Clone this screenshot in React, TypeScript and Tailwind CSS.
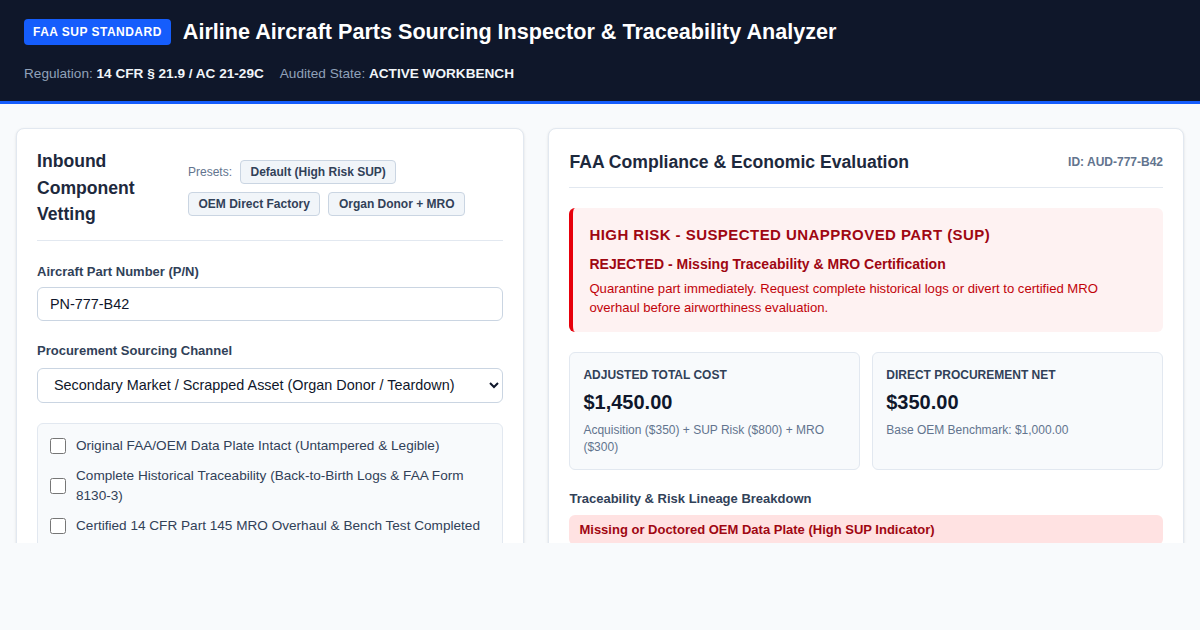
import { useState } from 'react';

const presets = ['OEM Direct Factory', 'Organ Donor + MRO'];

const checks = [
  'Original FAA/OEM Data Plate Intact (Untampered & Legible)',
  'Complete Historical Traceability (Back-to-Birth Logs & FAA Form 8130-3)',
  'Certified 14 CFR Part 145 MRO Overhaul & Bench Test Completed',
];

export default function App() {
  const [pn, setPn] = useState('PN-777-B42');

  return (
    <div className="min-h-[630px] bg-slate-50 font-['Liberation_Sans',Arial,sans-serif] text-slate-800">
      {/* Header */}
      <header className="h-[104px] bg-[#0f172a] border-b-[3px] border-blue-600 px-6 pt-[19px]">
        <div className="flex items-center gap-3">
          <span className="bg-blue-600 text-white text-[12px] font-bold tracking-[0.04em] px-[9px] h-[26px] flex items-center rounded">
            FAA SUP STANDARD
          </span>
          <h1 className="text-[21.6px] font-bold text-white leading-none">
            Airline Aircraft Parts Sourcing Inspector &amp; Traceability Analyzer
          </h1>
        </div>
        <div className="mt-[19px] text-[13.6px] leading-[20px] text-slate-400 flex gap-4">
          <span>Regulation: <b className="text-slate-100">14 CFR § 21.9 / AC 21-29C</b></span>
          <span>Audited State: <b className="text-slate-100">ACTIVE WORKBENCH</b></span>
        </div>
      </header>

      {/* Workspace */}
      <main className="h-[439px] overflow-hidden px-4 pt-6">
        <div className="grid grid-cols-[4fr_5fr] gap-6 items-start">
          {/* Left card */}
          <section className="bg-white border border-slate-200 rounded-lg px-5 pt-5 pb-6 shadow-sm">
            <div className="flex items-center gap-4 border-b border-slate-200 pb-3">
              <h2 className="w-[135px] shrink-0 text-[17.6px] font-semibold leading-[26.5px] text-slate-800 -mt-[1px]">
                Inbound Component Vetting
              </h2>
              <div className="flex flex-wrap items-center gap-2">
                <span className="text-[12px] text-slate-500">Presets:</span>
                <button className="text-[12px] font-semibold text-slate-700 bg-slate-100 border border-slate-300 rounded px-[9.5px] h-6">
                  Default (High Risk SUP)
                </button>
                {presets.map((p) => (
                  <button key={p} className="text-[12px] font-semibold text-slate-700 bg-slate-100 border border-slate-300 rounded px-[9.5px] h-6">
                    {p}
                  </button>
                ))}
              </div>
            </div>

            <div className="mt-[21px]">
              <label className="block text-[13px] font-semibold text-slate-700 mb-[6px]">Aircraft Part Number (P/N)</label>
              <input
                value={pn}
                onChange={(e) => setPn(e.target.value)}
                className="w-full h-[34px] border border-slate-300 rounded-md px-3 text-[14.4px] text-slate-900 bg-white outline-none"
              />
            </div>

            <div className="mt-5">
              <label className="block text-[13px] font-semibold text-slate-700 mb-[7px]">Procurement Sourcing Channel</label>
              <select
                defaultValue="donor"
                className="w-full h-[35px] border border-slate-300 rounded-md px-3 text-[14.4px] text-slate-900 bg-white outline-none"
              >
                <option value="oem">OEM Direct Factory (New Production)</option>
                <option value="donor">Secondary Market / Scrapped Asset (Organ Donor / Teardown)</option>
              </select>
            </div>

            <div className="mt-5 bg-slate-50 border border-slate-200 rounded-md px-3 py-3 flex flex-col gap-[10px]">
              {checks.map((c) => (
                <label key={c} className="flex items-center gap-[10px] text-[13.6px] leading-[20px] text-slate-700">
                  <input type="checkbox" className="w-4 h-4 shrink-0 accent-blue-600" />
                  <span>{c}</span>
                </label>
              ))}
            </div>
          </section>

          {/* Right card */}
          <section className="bg-white border border-slate-200 rounded-lg px-5 pt-5 pb-6 shadow-sm">
            <div className="flex items-center justify-between border-b border-slate-200 pb-3">
              <h2 className="text-[17.6px] font-semibold text-slate-800 leading-[26px]">FAA Compliance &amp; Economic Evaluation</h2>
              <span className="text-[12px] font-semibold text-slate-500">ID: AUD-777-B42</span>
            </div>

            <div className="mt-5 bg-[#fef2f2] border-l-4 border-red-600 rounded-md px-4 pt-4 pb-[15px]">
              <div className="text-[15px] font-semibold text-red-800 tracking-[0.03em] leading-[22px]">
                HIGH RISK - SUSPECTED UNAPPROVED PART (SUP)
              </div>
              <div className="mt-2 text-[14px] font-bold text-red-800 leading-[20px]">
                REJECTED - Missing Traceability &amp; MRO Certification
              </div>
              <p className="mt-[5px] text-[13.1px] text-red-700 leading-[19px]">
                Quarantine part immediately. Request complete historical logs or divert to certified MRO overhaul before airworthiness evaluation.
              </p>
            </div>

            <div className="mt-5 grid grid-cols-2 gap-3">
              <div className="bg-slate-50 border border-slate-200 rounded-md px-[13px] pt-[13px] pb-[13px] min-h-[117px]">
                <div className="text-[12px] font-semibold text-slate-700 uppercase">Adjusted Total Cost</div>
                <div className="mt-1 text-[20px] font-bold text-slate-900 leading-[28px]">$1,450.00</div>
                <div className="mt-[6px] text-[12px] text-slate-500 leading-[17px]">
                  Acquisition ($350) + SUP Risk ($800) + MRO ($300)
                </div>
              </div>
              <div className="bg-slate-50 border border-slate-200 rounded-md px-[13px] pt-[13px] pb-[13px] min-h-[117px]">
                <div className="text-[12px] font-semibold text-slate-700 uppercase">Direct Procurement Net</div>
                <div className="mt-1 text-[20px] font-bold text-slate-900 leading-[28px]">$350.00</div>
                <div className="mt-[6px] text-[12px] text-slate-500 leading-[17px]">Base OEM Benchmark: $1,000.00</div>
              </div>
            </div>

            <h3 className="mt-[19px] text-[13px] font-semibold text-slate-700">Traceability &amp; Risk Lineage Breakdown</h3>
            <div className="mt-[6px] bg-red-100 rounded-md px-2.5 pt-[5px] pb-1.5 text-[13px] font-semibold text-red-800">
              Missing or Doctored OEM Data Plate (High SUP Indicator)
            </div>
          </section>
        </div>
      </main>
    </div>
  );
}
